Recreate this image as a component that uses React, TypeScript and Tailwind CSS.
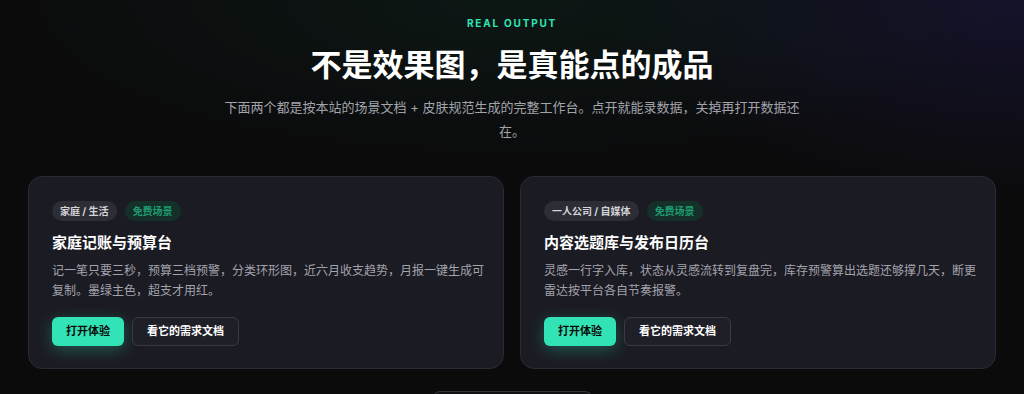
import React from "react";

type Scene = {
  tag: string;
  title: string;
  desc: string;
};

const scenes: Scene[] = [
  {
    tag: "家庭 / 生活",
    title: "家庭记账与预算台",
    desc: "记一笔只要三秒，预算三档预警，分类环形图，近六月收支趋势，月报一键生成可复制。墨绿主色，超支才用红。",
  },
  {
    tag: "一人公司 / 自媒体",
    title: "内容选题库与发布日历台",
    desc: "灵感一行字入库，状态从灵感流转到复盘完，库存预警算出选题还够撑几天，断更雷达按平台各自节奏报警。",
  },
];

function Card({ s }: { s: Scene }) {
  return (
    <div className="rounded-[14px] border border-[#2a2a34] bg-[#1b1b23] px-[23px] pb-[22px] pt-[24px]">
      <div className="flex items-center gap-2">
        <span className="inline-flex h-5 items-center rounded-full bg-[#2d2d35] px-2 text-[10px] font-bold text-[#d4d4d8]">
          {s.tag}
        </span>
        <span className="inline-flex h-5 items-center rounded-full bg-[#143029] px-2 text-[10px] font-semibold text-[#1f9b72]">
          免费场景
        </span>
      </div>
      <h3 className="mt-[11px] text-[15px] font-bold leading-[22px] text-white">{s.title}</h3>
      <p className="-mr-2 mt-[7px] text-[12px] leading-[20px] text-[#a3a3ad]">{s.desc}</p>
      <div className="mt-[16px] flex items-center gap-2">
        <button className="h-[29px] rounded-[6px] bg-[#32e3b6] px-3.5 text-[11px] font-bold text-[#0b0b0c] shadow-[0_4px_16px_rgba(50,227,182,0.3)]">
          打开体验
        </button>
        <button className="h-[29px] rounded-[6px] border border-[#3a3a44] bg-[#1f1f28] px-3.5 text-[11px] font-bold text-white">
          看它的需求文档
        </button>
      </div>
    </div>
  );
}

export default function App() {
  return (
    <div
      className="relative h-[394px] overflow-hidden bg-[#0b0b0c] bg-[radial-gradient(ellipse_420px_200px_at_100%_0%,rgba(40,34,100,0.35),transparent),radial-gradient(ellipse_500px_160px_at_50%_0%,rgba(20,80,60,0.18),transparent)]"
      style={{ fontFamily: 'Inter, "Noto Sans CJK SC", "Noto Sans", sans-serif' }}
    >
      <div className="flex flex-col items-center pt-[17px]">
        <div className="text-[10px] font-bold leading-[12px] tracking-[0.18em] text-[#2ee6b6]">
          REAL OUTPUT
        </div>
        <h2 className="mt-[16px] text-[31px] font-bold leading-[40px] text-white">
          不是效果图，是真能点的成品
        </h2>
        <p className="mt-[10px] max-w-[580px] text-center text-[13px] leading-[24px] text-[#a3a3ac]">
          下面两个都是按本站的场景文档 + 皮肤规范生成的完整工作台。点开就能录数据，关掉再打开数据还在。
        </p>
      </div>
      <div className="mt-[33px] grid grid-cols-2 gap-4 px-7">
        {scenes.map((s) => (
          <Card key={s.title} s={s} />
        ))}
      </div>
      <div className="mt-[22px] flex justify-center">
        <div aria-label="浏览全部场景文档" className="h-[34px] w-[161px] rounded-[8px] border border-[#34343c] bg-[#111114]" />
      </div>
    </div>
  );
}
